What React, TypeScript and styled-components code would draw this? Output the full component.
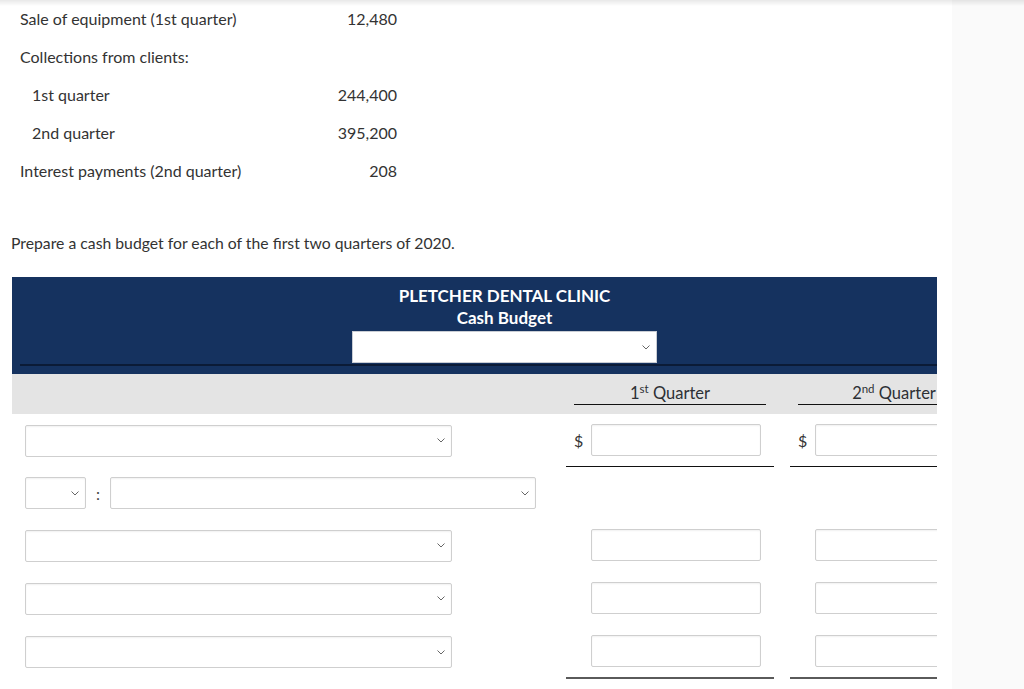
import styled, { createGlobalStyle } from "styled-components";

const GlobalStyle = createGlobalStyle`
  body {
    margin: 0;
    font-family: Lato, "Open Sans", sans-serif;
    color: #333;
    background: #fff;
  }
`;

interface DataRow {
  label: string;
  value?: string;
  indent?: boolean;
}

const dataRows: DataRow[] = [
  { label: "Sale of equipment (1st quarter)", value: "12,480" },
  { label: "Collections from clients:" },
  { label: "1st quarter", value: "244,400", indent: true },
  { label: "2nd quarter", value: "395,200", indent: true },
  { label: "Interest payments (2nd quarter)", value: "208" },
];

type Line = "none" | "thin" | "thick";

interface BudgetRow {
  kind: "single" | "split";
  dollar?: boolean;
  amounts: boolean;
  line: Line;
}

const budgetRows: BudgetRow[] = [
  { kind: "single", dollar: true, amounts: true, line: "thin" },
  { kind: "split", amounts: false, line: "none" },
  { kind: "single", amounts: true, line: "none" },
  { kind: "single", amounts: true, line: "none" },
  { kind: "single", amounts: true, line: "thick" },
  { kind: "single", amounts: true, line: "none" },
];

function Chevron() {
  return (
    <svg width="8" height="5" viewBox="0 0 8 5" fill="none">
      <path d="M0.5 0.5 L4 4 L7.5 0.5" stroke="#666" strokeWidth="1" />
    </svg>
  );
}

function Dropdown({ width }: { width: number }) {
  return (
    <SelectBox style={{ width }}>
      <Chevron />
    </SelectBox>
  );
}

function AmountCell({ dollar, line, show }: { dollar?: boolean; line: Line; show: boolean }) {
  return (
    <Amount $line={line}>
      <Dollar>{dollar ? "$" : ""}</Dollar>
      {show && <InputBox />}
    </Amount>
  );
}

export default function App() {
  return (
    <>
      <GlobalStyle />
      <TopShadow />
      <Page>
        <Main>
          <DataList>
            {dataRows.map((row, i) => (
              <DataLine key={i}>
                <DataLabel $indent={row.indent}>{row.label}</DataLabel>
                <DataValue>{row.value}</DataValue>
              </DataLine>
            ))}
          </DataList>

          <Prompt>Prepare a cash budget for each of the first two quarters of 2020.</Prompt>

          <TableWrap>
            <Header>
              <Title>PLETCHER DENTAL CLINIC</Title>
              <Title>Cash Budget</Title>
              <HeaderSelect>
                <Chevron />
              </HeaderSelect>
              <HeaderRule />
            </Header>
            <Band>
              <Grid>
                <span />
                <QuarterHead>
                  1<sup>st</sup> Quarter
                </QuarterHead>
                <QuarterHead>
                  2<sup>nd</sup> Quarter
                </QuarterHead>
              </Grid>
            </Band>
            {budgetRows.map((row, i) => (
              <Grid key={i}>
                <LabelCell>
                  {row.kind === "single" ? (
                    <Dropdown width={427} />
                  ) : (
                    <>
                      <Dropdown width={61} />
                      <Colon>:</Colon>
                      <Dropdown width={426} />
                    </>
                  )}
                </LabelCell>
                <AmountCell dollar={row.dollar} line={row.line} show={row.amounts} />
                <AmountCell dollar={row.dollar} line={row.line} show={row.amounts} />
              </Grid>
            ))}
          </TableWrap>
        </Main>
        <Side />
      </Page>
    </>
  );
}

const TopShadow = styled.div`
  position: fixed;
  top: 0;
  left: 0;
  right: 0;
  height: 6px;
  background: linear-gradient(rgba(0, 0, 0, 0.09), rgba(0, 0, 0, 0));
  z-index: 5;
`;

const Page = styled.div`
  display: flex;
  height: 689px;
  overflow: hidden;
`;

const Main = styled.div`
  width: 952px;
  background: #fff;
  overflow: hidden;
`;

const Side = styled.div`
  flex: 1;
  background: #fafafa;
`;

const DataList = styled.div`
  display: flex;
  flex-direction: column;
  padding-left: 20px;
`;

const DataLine = styled.div`
  display: grid;
  grid-template-columns: 300px 77px;
  height: 38px;
  box-sizing: border-box;
  padding-bottom: 2px;
  align-items: center;
  font-size: 16px;
`;

const DataLabel = styled.span<{ $indent?: boolean }>`
  padding-left: ${p => (p.$indent ? "12px" : "0")};
`;

const DataValue = styled.span`
  text-align: right;
`;

const Prompt = styled.p`
  margin: 43px 0 24px 11px;
  font-size: 15.75px;
  line-height: 20px;
`;

const TableWrap = styled.div`
  margin-left: 12px;
  width: 925px;
  overflow: hidden;
`;

const Header = styled.div`
  width: 985px;
  box-sizing: border-box;
  background: #15325f;
  padding: 8px 8px;
  display: flex;
  flex-direction: column;
  align-items: center;
`;

const Title = styled.div`
  color: #fff;
  font-weight: 700;
  font-size: 17px;
  line-height: 22px;
`;

const HeaderSelect = styled.div`
  width: 305px;
  height: 32px;
  box-sizing: border-box;
  margin-top: 2px;
  background: #fff;
  border: 1px solid #c9cdd4;
  display: flex;
  align-items: center;
  justify-content: flex-end;
  padding-right: 6px;
`;

const HeaderRule = styled.div`
  align-self: stretch;
  height: 2px;
  margin-top: 1px;
  background: #0b1b36;
`;

const Band = styled.div`
  background: #e4e4e4;
  padding: 8px 0 9px;
`;

const Grid = styled.div`
  display: grid;
  grid-template-columns: 538px 208px 208px;
  column-gap: 16px;
  width: max-content;
`;

const QuarterHead = styled.div`
  margin: 0 8px;
  text-align: center;
  font-size: 16.5px;
  line-height: 22px;
  color: #2d3035;
  border-bottom: 1px solid #111;

  sup {
    font-size: 11.5px;
    line-height: 0;
  }
`;

const LabelCell = styled.div`
  display: flex;
  align-items: center;
  padding: 10px 0 10px 13px;
`;

const Colon = styled.span`
  width: 24px;
  text-align: center;
  font-size: 16px;
  color: #444;
`;

const SelectBox = styled.div`
  height: 32px;
  box-sizing: border-box;
  background: #fff;
  border: 1px solid #cfcfcf;
  border-radius: 2px;
  box-shadow: inset 0 1px 2px rgba(0, 0, 0, 0.06);
  display: flex;
  align-items: center;
  justify-content: flex-end;
  padding-right: 6px;
`;

const Amount = styled.div<{ $line: Line }>`
  display: flex;
  align-items: center;
  padding: 10px 13px 10px 8px;
  border-bottom: ${p =>
    p.$line === "thin" ? "1px solid #111" : p.$line === "thick" ? "2px solid #5a5a5a" : "1px solid transparent"};
`;

const Dollar = styled.span`
  width: 17px;
  font-size: 16px;
  color: #333;
`;

const InputBox = styled.div`
  flex: 1;
  height: 32px;
  box-sizing: border-box;
  border: 1px solid #cfcfcf;
  border-radius: 2px;
  box-shadow: inset 0 1px 2px rgba(0, 0, 0, 0.06);
  background: #fff;
`;
